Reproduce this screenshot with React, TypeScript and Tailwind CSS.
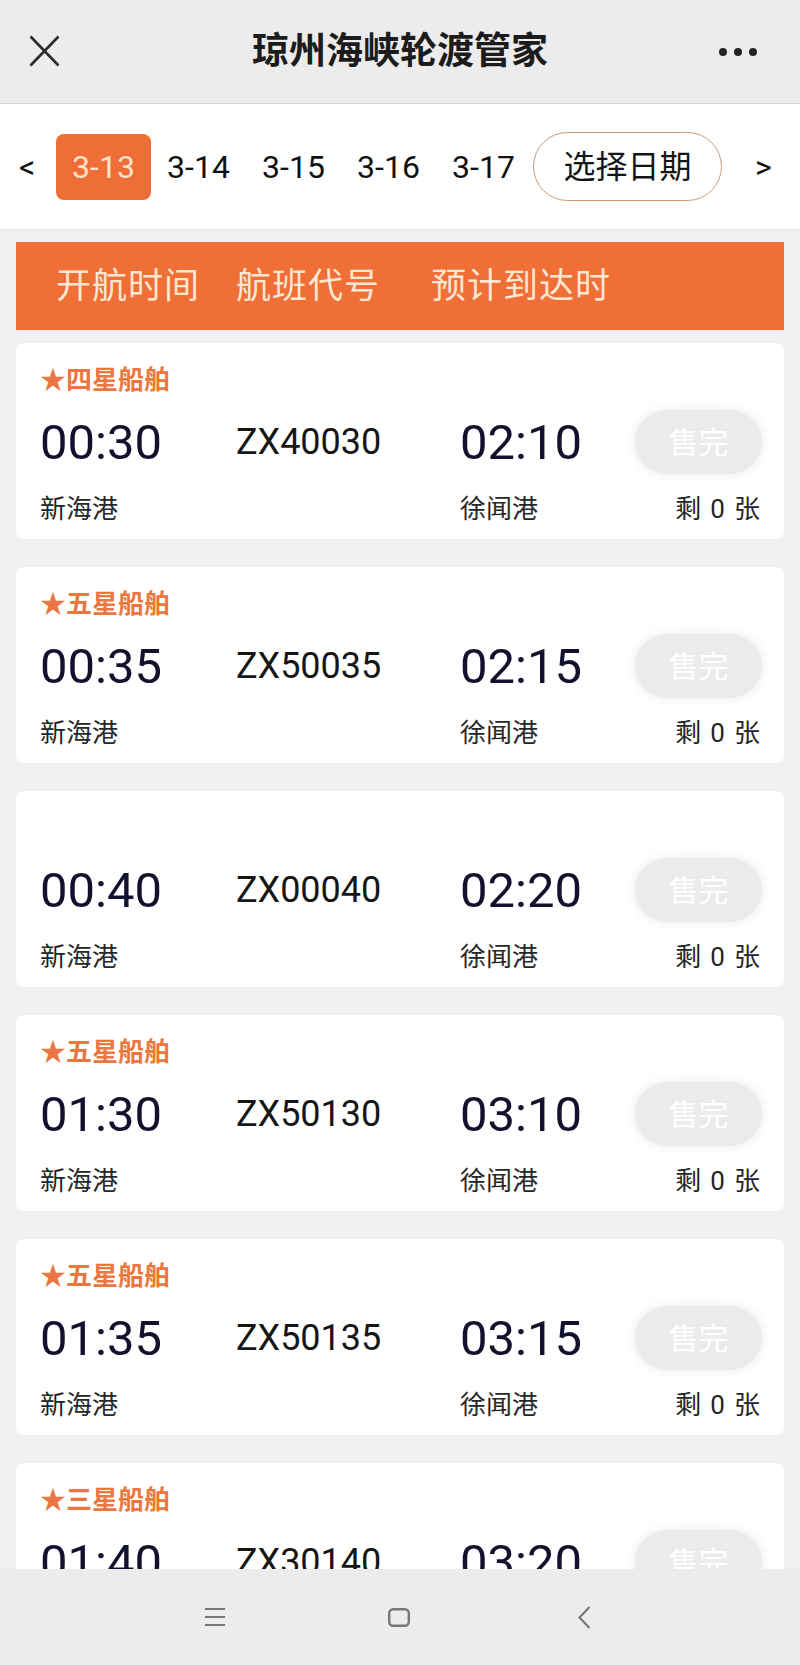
import React from "react";

interface Flight {
  ship: string;
  dep: string;
  code: string;
  arr: string;
}

const flights: Flight[] = [
  { ship: "★四星船舶", dep: "00:30", code: "ZX40030", arr: "02:10" },
  { ship: "★五星船舶", dep: "00:35", code: "ZX50035", arr: "02:15" },
  { ship: "", dep: "00:40", code: "ZX00040", arr: "02:20" },
  { ship: "★五星船舶", dep: "01:30", code: "ZX50130", arr: "03:10" },
  { ship: "★五星船舶", dep: "01:35", code: "ZX50135", arr: "03:15" },
  { ship: "★三星船舶", dep: "01:40", code: "ZX30140", arr: "03:20" },
];

const dates = ["3-13", "3-14", "3-15", "3-16", "3-17"];

const FlightCard: React.FC<{ item: Flight }> = ({ item }) => {
  const { ship, dep, code, arr } = item;

  return (
    <div className="bg-white rounded-[8px] pl-[24px] pr-[22px] pt-[24px] pb-[15px] shrink-0">
      <div className="h-[26px] text-[26px] leading-[26px] font-bold text-[#ea7640]">
        {ship}
      </div>
      <div className="mt-[17px] h-[64px] flex items-center">
        <div className="w-[196px] text-[49px] leading-none text-[#12122e]">
          {dep}
        </div>
        <div className="w-[224px] text-[36px] leading-none text-[#161616]">
          {code}
        </div>
        <div className="w-[175px] text-[49px] leading-none text-[#12122e]">
          {arr}
        </div>
        <div className="w-[127px] h-[64px] rounded-full bg-[#ebebeb] flex items-center justify-center text-[30px] text-white shadow-[0_0_12px_rgba(0,0,0,0.09)]">
          售完
        </div>
      </div>
      <div className="mt-[20px] h-[30px] flex items-center text-[26px] leading-none text-[#262626]">
        <div className="w-[420px]">新海港</div>
        <div className="flex-1">徐闻港</div>
        <div className="flex items-center gap-[9px] pr-[2px]">
          <span>剩</span>
          <span>0</span>
          <span>张</span>
        </div>
      </div>
    </div>
  );
};

export default function App() {
  return (
    <div className="w-[800px] h-[1665px] flex flex-col overflow-hidden bg-[#f1f1f4] font-['Roboto','Noto_Sans_CJK_SC',sans-serif]">
      {/* title bar */}
      <div className="h-[104px] shrink-0 bg-[#ececec] border-b border-[#d6d6d6] flex items-center">
        <div className="w-[110px] pl-[29px]">
          <svg width="31" height="32" viewBox="0 0 31 32" className="-mt-[2px]">
            <path d="M1.5 1.5 L29.5 30.5 M29.5 1.5 L1.5 30.5" stroke="#2b2b2b" strokeWidth="2.6" fill="none" />
          </svg>
        </div>
        <div className="flex-1 text-center text-[37px] leading-none font-bold text-[#1c1c1c]">
          琼州海峡轮渡管家
        </div>
        <div className="w-[110px] pr-[43px] flex items-center justify-end gap-[7px]">
          <div className="w-[8px] h-[8px] rounded-full bg-[#232323]" />
          <div className="w-[8px] h-[8px] rounded-full bg-[#232323]" />
          <div className="w-[8px] h-[8px] rounded-full bg-[#232323]" />
        </div>
      </div>

      {/* date selector */}
      <div className="h-[126px] shrink-0 bg-white border-b border-[#e6e6e6] flex items-center pl-[19px]">
        <div className="w-[37px] text-[32px] leading-none text-[#111]">&lt;</div>
        {dates.map((d, i) => (
          <div
            key={d}
            className={
              i === 0
                ? "w-[95px] h-[66px] rounded-[8px] bg-[#ef6e37] flex items-center justify-center text-[32px] leading-none text-[#fde2c8]"
                : "w-[95px] h-[66px] flex items-center justify-center text-[32px] leading-none text-[#111]"
            }
          >
            {d}
          </div>
        ))}
        <div className="ml-[2px] w-[189px] h-[69px] rounded-full border-[1.5px] border-[#c99a74] flex items-center justify-center text-[32px] leading-none text-[#151515]">
          选择日期
        </div>
        <div className="ml-[33px] text-[32px] leading-none text-[#111]">&gt;</div>
      </div>

      {/* list */}
      <div className="flex-1 overflow-hidden px-[16px] pt-[12px] flex flex-col">
        <div className="h-[88px] shrink-0 bg-[#ef6f36] flex items-center pl-[40px] text-[35px] leading-none tracking-[1px] text-[#fde6d2]">
          <div className="w-[180px]">开航时间</div>
          <div className="w-[195px]">航班代号</div>
          <div>预计到达时</div>
        </div>
        <div className="mt-[13px] flex flex-col gap-[28px]">
          {flights.map((f) => (
            <FlightCard key={f.code} item={f} />
          ))}
        </div>
      </div>

      {/* system nav bar */}
      <div className="h-[96px] shrink-0 bg-[#ececec] flex items-center">
        <svg width="20" height="18" viewBox="0 0 20 18" className="ml-[205px]">
          <path d="M0 1 H20 M0 9 H20 M0 17 H20" stroke="#777" strokeWidth="2" fill="none" />
        </svg>
        <svg width="22" height="19" viewBox="0 0 22 19" className="ml-[163px]">
          <rect x="1.2" y="1.2" width="19.6" height="16.6" rx="4" stroke="#777" strokeWidth="2.4" fill="none" />
        </svg>
        <svg width="13" height="23" viewBox="0 0 13 23" className="ml-[168px]">
          <path d="M11.5 1 L1.5 11.5 L11.5 22" stroke="#777" strokeWidth="2.2" fill="none" />
        </svg>
      </div>
    </div>
  );
}
